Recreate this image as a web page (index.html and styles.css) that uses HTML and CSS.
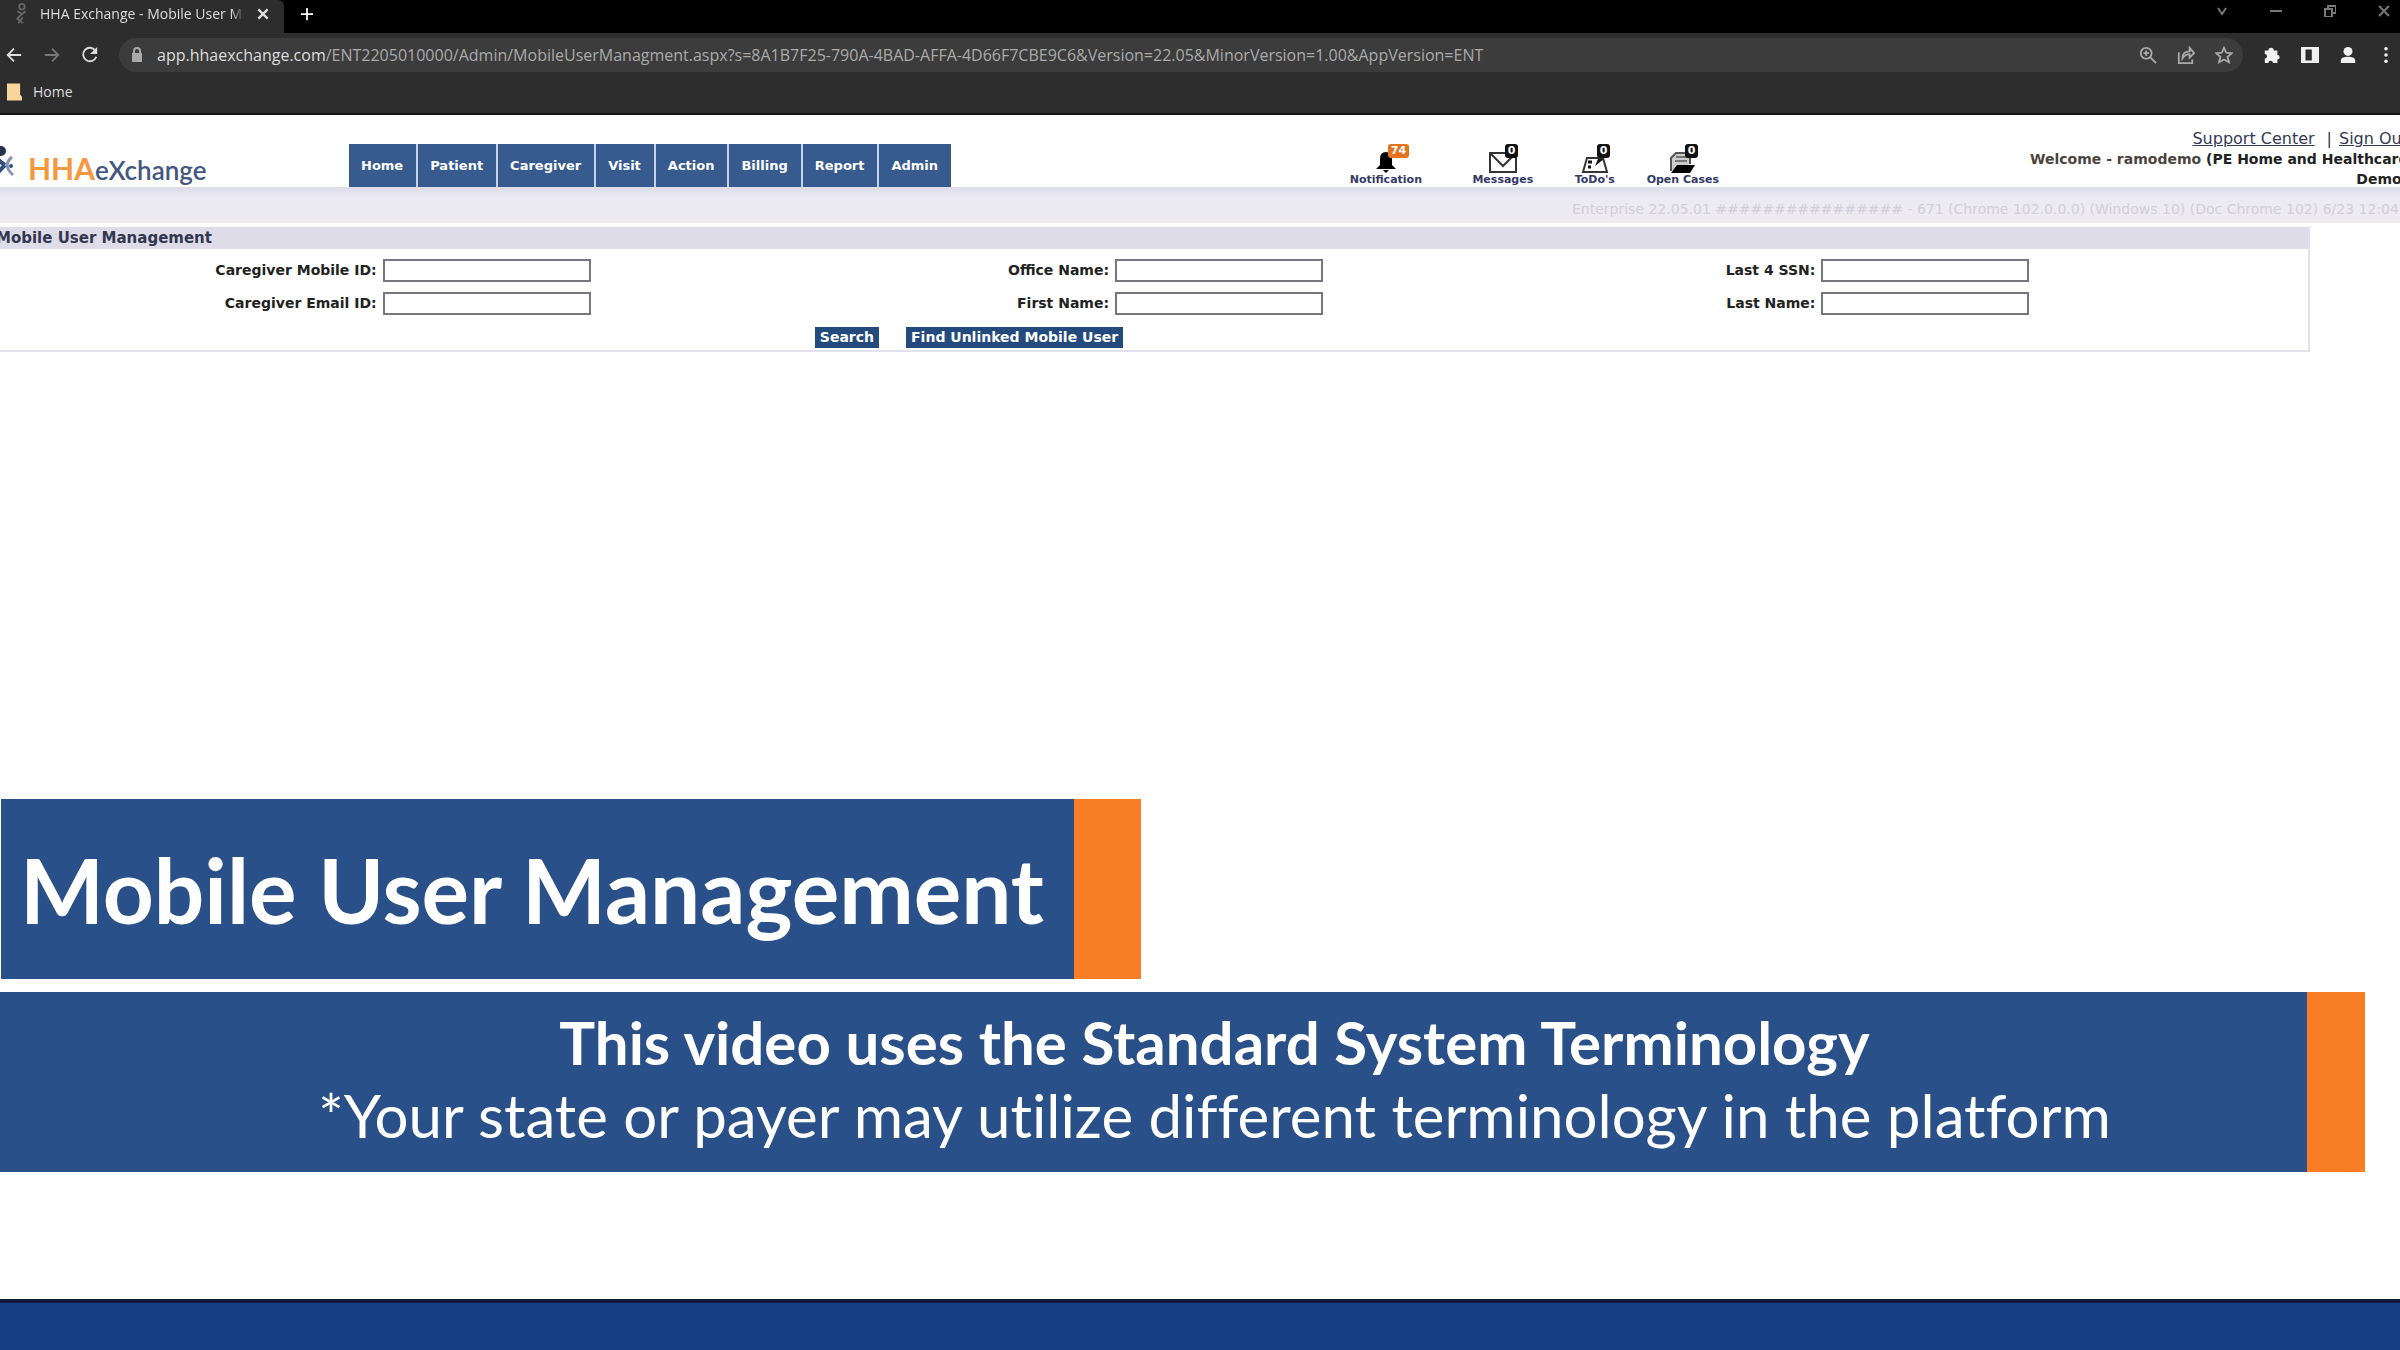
FILE: index.html
```html
<!DOCTYPE html>
<html lang="en">
<head>
    <meta charset="UTF-8">
    <meta name="viewport" content="width=device-width, initial-scale=1.0">
    <title>HHA Exchange - Mobile User Management</title>
    <link rel="stylesheet" href="styles.css">
</head>
<body>
    <!-- Browser chrome -->
    <div class="browser">
        <div class="tab-strip">
            <div class="tab">
                <svg class="favicon" viewBox="0 0 14 24"><circle cx="8" cy="4" r="3"/><path d="M3 9l5 3 4-3M8 12l-5 5 6 5M4 22l5-6"/></svg>
                <span class="tab-title">HHA Exchange - Mobile User Ma</span>
                <button class="tab-close" aria-label="Close tab"><svg viewBox="0 0 12 12"><path d="M2 2l8 8M10 2l-8 8"/></svg></button>
            </div>
            <button class="new-tab" aria-label="New tab"><svg viewBox="0 0 16 16"><path d="M8 1v14M1 8h14"/></svg></button>
            <div class="window-controls">
                <button aria-label="Search tabs"><svg viewBox="0 0 12 12"><path d="M2 3l4 6 4-6"/></svg></button>
                <button aria-label="Minimize"><svg viewBox="0 0 12 12"><path d="M0 6h12"/></svg></button>
                <button aria-label="Restore"><svg viewBox="0 0 12 12"><path d="M1 4h7v8H1zM4 4V1h8v7H8"/></svg></button>
                <button aria-label="Close"><svg viewBox="0 0 12 12"><path d="M1 1l10 10M11 1L1 11"/></svg></button>
            </div>
        </div>

        <div class="toolbar">
            <button aria-label="Back"><svg viewBox="0 0 20 20"><path d="M18 10H3M10 3l-7 7 7 7"/></svg></button>
            <button class="muted" aria-label="Forward"><svg viewBox="0 0 20 20"><path d="M2 10h15M10 3l7 7-7 7"/></svg></button>
            <button aria-label="Reload"><svg viewBox="0 0 20 20"><path d="M16 5a7.500 7.500 0 1 0 1 7"/><path class="fill" d="M18 1v8h-8z"/></svg></button>
            <div class="address">
                <svg class="lock" viewBox="0 0 12 16"><path class="fill" d="M1 6h10v9H1z"/><path d="M3 7V4a3 3 0 0 1 6 0v3"/></svg>
                <span class="url"><b>app.hhaexchange.com</b>/ENT2205010000/Admin/MobileUserManagment.aspx?s=8A1B7F25-790A-4BAD-AFFA-4D66F7CBE9C6&amp;Version=22.05&amp;MinorVersion=1.00&amp;AppVersion=ENT</span>
                <button aria-label="Zoom"><svg viewBox="0 0 20 20"><circle cx="8" cy="8" r="6"/><path d="M12 12l7 7M5 8h6M8 5v6"/></svg></button>
                <button aria-label="Share"><svg viewBox="0 0 20 20"><path d="M2 7v12h15v-4M6 14c0-6 4-8 8-8V2l5 6-5 5V9c-4 0-6 2-8 5z"/></svg></button>
                <button aria-label="Bookmark"><svg viewBox="0 0 20 20"><path d="M10 2l2.500 5.500 6 .5-4.500 4 1.500 6-5.500-3-5.500 3L6 12 1.500 8l6-.5z"/></svg></button>
            </div>
            <button class="bright" aria-label="Extensions"><svg viewBox="0 0 20 20"><path class="fill" d="M2 5h4a3 3 0 1 1 6 0h4v5a2.500 2.500 0 1 1 0 5v4h-5a2.500 2.500 0 1 0-5 0H2v-5a2.500 2.500 0 1 0 0-5z"/></svg></button>
            <button class="bright" aria-label="Side panel"><svg viewBox="0 0 20 20"><path class="fill" fill-rule="evenodd" d="M0 1h20v18H0zM5 4v12h7V4z"/></svg></button>
            <button class="bright" aria-label="Profile"><svg viewBox="0 0 20 20"><circle class="fill" cx="10" cy="6" r="5"/><path class="fill" d="M2 19v-3q0-4 8-4t8 4v3z"/></svg></button>
            <button class="bright" aria-label="Menu"><svg viewBox="0 0 20 20"><circle class="fill" cx="10" cy="3" r="2"/><circle class="fill" cx="10" cy="10" r="2"/><circle class="fill" cx="10" cy="17" r="2"/></svg></button>
        </div>

        <div class="bookmarks">
            <a href="#"><svg viewBox="0 0 16 18"><path d="M0 0h14v12l2 2v4H0z"/></svg>Home</a>
        </div>
    </div>

    <!-- Application header -->
    <header class="app-header">
        <a class="logo" href="#" aria-label="HHAeXchange">
            <svg viewBox="0 0 14 36"><circle cx="1" cy="7" r="5" fill="#26354f"/><path d="M-4 13q4 5 9 8M-4 31q4-5 9-10" fill="none" stroke="#34507f" stroke-width="4"/><path d="M12 13q-10 8 1 18" fill="none" stroke="#8795b3" stroke-width="3"/><circle cx="11" cy="22" r="2" fill="#34507f"/></svg>
            <span class="logo-hha">HHA</span><span class="logo-ex">eXchange</span>
        </a>

        <nav class="main-nav">
            <a href="#">Home</a>
            <a href="#">Patient</a>
            <a href="#">Caregiver</a>
            <a href="#">Visit</a>
            <a href="#">Action</a>
            <a href="#">Billing</a>
            <a href="#">Report</a>
            <a href="#">Admin</a>
        </nav>

        <div class="shortcuts">
            <a href="#">
                <span class="shortcut-icon">
                    <svg viewBox="0 0 28 28"><path d="M14 7q5 0 6 7v6l4 4H4l4-4v-6q0-7 6-7zM11 25h6l-3 3z" fill="#000"/></svg>
                    <span class="badge badge-alert">74</span>
                </span>
                Notification
            </a>
            <a href="#">
                <span class="shortcut-icon">
                    <svg viewBox="0 0 28 28"><path d="M1 8h26v19H1zM1 8l13 13L27 8" fill="#fff" stroke="#333" stroke-width="2"/></svg>
                    <span class="badge">0</span>
                </span>
                Messages
            </a>
            <a href="#">
                <span class="shortcut-icon">
                    <svg viewBox="0 0 28 28"><path d="M6 13h16l4 14H2z" fill="#fff" stroke="#333" stroke-width="2"/><path d="M7 17h4M7 22h3" stroke="#111" stroke-width="3"/><path d="M14 21l3-7h6z" fill="#111"/></svg>
                    <span class="badge">0</span>
                </span>
                ToDo's
            </a>
            <a href="#">
                <span class="shortcut-icon">
                    <svg viewBox="0 0 28 28"><path d="M2 26V13l5-5h14v11" fill="#ccc" stroke="#555" stroke-width="2"/><path d="M7 12h12M6 16h12" stroke="#777" stroke-width="2"/><path d="M8 20h18l-5 8H2z" fill="#000"/></svg>
                    <span class="badge">0</span>
                </span>
                Open Cases
            </a>
        </div>

        <div class="account">
            <div class="account-links"><a href="#">Support Center</a><span>|</span><a href="#">Sign Out</a></div>
            <div><span class="welcome">Welcome - ramodemo</span> (PE Home and Healthcare<br>Demo)</div>
        </div>
    </header>
    <div class="version-bar">Enterprise 22.05.01 ################ - 671 (Chrome 102.0.0.0) (Windows 10) (Doc Chrome 102) 6/23 12:04 PM</div>

    <main>
        <form class="panel">
            <h1>Mobile User Management</h1>
            <div class="fields">
                <label for="mobileId">Caregiver Mobile ID:</label>
                <input type="text" id="mobileId">
                <label for="officeName">Office Name:</label>
                <input type="text" id="officeName">
                <label for="ssn">Last 4 SSN:</label>
                <input type="text" id="ssn">
                <label for="emailId">Caregiver Email ID:</label>
                <input type="text" id="emailId">
                <label for="firstName">First Name:</label>
                <input type="text" id="firstName">
                <label for="lastName">Last Name:</label>
                <input type="text" id="lastName">
            </div>
            <div class="actions">
                <button type="button">Search</button>
                <button type="button">Find Unlinked Mobile User</button>
            </div>
        </form>
    </main>

    <!-- Video captions -->
    <section class="captions">
        <div class="caption caption-title">
            <h2>Mobile User Management</h2>
        </div>
        <div class="caption caption-note">
            <p><strong>This video uses the Standard System Terminology</strong><br>*Your state or payer may utilize different terminology in the platform</p>
        </div>
    </section>

    <footer class="footer-bar"></footer>
</body>
</html>
```
FILE: styles.css
```css
* {
    margin: 0;
    padding: 0;
    box-sizing: border-box;
}

body {
    font-family: "DejaVu Sans", Verdana, sans-serif;
    font-size: 14px;
    color: #222;
    background: #fefefe;
    min-height: 100vh;
    display: flex;
    flex-direction: column;
    overflow: hidden;
}

a {
    color: inherit;
    text-decoration: none;
}

button {
    border: none;
    background: none;
    color: inherit;
    font-family: inherit;
}

/* Browser chrome */
.browser {
    background: #2d2d2d;
    color: #ddd;
    font-family: "Open Sans", "Noto Sans", sans-serif;
    border-bottom: 2px solid #151515;
}

.browser svg {
    display: block;
    fill: none;
    stroke: currentColor;
    stroke-width: 2;
}

.browser .fill {
    fill: currentColor;
    stroke: none;
}

.tab-strip {
    display: flex;
    align-items: center;
    height: 33px;
    background: #000;
}

.tab {
    display: flex;
    align-items: center;
    width: 284px;
    height: 33px;
    padding: 0 14px 6px;
    background: #2d2d2d;
    border-top-right-radius: 6px;
}

.favicon {
    width: 14px;
    height: 22px;
    margin-right: 12px;
    color: #666;
}

.tab-title {
    flex: 1;
    overflow: hidden;
    white-space: nowrap;
    font-size: 14px;
    font-weight: 500;
    line-height: 24px;
    mask-image: linear-gradient(to right, #000 94%, transparent);
}

.tab-close {
    margin-left: 12px;
}

.tab-close svg {
    width: 14px;
    height: 14px;
}

.new-tab {
    margin: 0 0 6px 16px;
    color: #fff;
}

.new-tab svg {
    width: 14px;
    height: 14px;
}

.window-controls {
    display: flex;
    gap: 42px;
    margin: 0 10px 12px auto;
    color: #777;
}

.window-controls svg {
    width: 12px;
    height: 12px;
}

.toolbar {
    display: flex;
    align-items: center;
    gap: 20px;
    height: 43px;
    padding: 0 5px;
}

.toolbar svg {
    width: 18px;
    height: 18px;
}

.toolbar .muted {
    color: #777;
}

.toolbar .bright {
    color: #f0f0f0;
}

.address {
    flex: 1;
    display: flex;
    align-items: center;
    gap: 20px;
    height: 34px;
    padding: 0 10px 0 12px;
    border-radius: 17px;
    background: #3c3c3c;
    color: #aaa;
}

.address .lock {
    width: 12px;
    height: 16px;
}

.url {
    flex: 1;
    margin-left: -6px;
    font-size: 16px;
    white-space: nowrap;
}

.url b {
    color: #ddd;
    font-weight: 500;
}

.bookmarks {
    display: flex;
    align-items: center;
    height: 37px;
    padding: 0 7px 6px;
}

.bookmarks a {
    display: flex;
    align-items: center;
    gap: 11px;
    font-size: 14px;
}

.bookmarks svg {
    width: 15px;
    height: 18px;
    fill: #f7d59c;
    stroke: none;
}

/* Application header */
.app-header {
    display: grid;
    grid-template-columns: 349px 59fr auto 41fr;
    grid-template-rows: 72px;
    background: #fff;
    font-weight: bold;
}

.logo {
    display: flex;
    align-items: baseline;
    padding-top: 29px;
    font-family: Lato, sans-serif;
    line-height: 40px;
}

.logo svg {
    width: 14px;
    height: 36px;
    margin: 0 14px -4px 0;
}

.logo-hha {
    color: #f5983f;
    font-size: 30px;
    font-weight: bold;
}

.logo-ex {
    color: #43577f;
    font-size: 26px;
    font-weight: 600;
}

.main-nav {
    display: flex;
    align-items: flex-end;
}

.main-nav a {
    padding: 0 13px 0 12px;
    border-right: 2px solid #c5d3ea;
    background: #375b8f;
    color: #fff;
    font-size: 13px;
    line-height: 43px;
}

.main-nav a:last-child {
    border-right: none;
}

.shortcuts {
    display: grid;
    grid-template-columns: 134px 100px 84px 92px;
    align-items: end;
    margin-left: 4px;
    font-size: 11px;
    line-height: 14px;
    color: #333a66;
}

.shortcuts a {
    display: flex;
    flex-direction: column;
    align-items: center;
}

.shortcut-icon {
    position: relative;
}

.shortcut-icon svg {
    display: block;
    width: 28px;
    height: 28px;
}

.badge {
    position: absolute;
    top: -1px;
    left: 16px;
    padding: 0 3px;
    border-radius: 3px;
    background: #111;
    color: #fff;
}

.badge-alert {
    background: #e5731d;
}

.account {
    padding-top: 14px;
    margin-right: -8px;
    text-align: right;
    line-height: 20px;
    white-space: nowrap;
}

.account-links {
    color: #333a55;
    font-size: 16px;
    font-weight: normal;
}

.account-links a {
    text-decoration: underline;
}

.account-links span {
    margin: 0 7px 0 12px;
}

.welcome {
    color: #4b433e;
}

.version-bar {
    height: 36px;
    margin-bottom: 4px;
    padding-left: 65.5%;
    overflow: hidden;
    background: linear-gradient(#dcdce8, #ebeaf4 30%, #eeebf0);
    color: #d2cfd8;
    line-height: 44px;
    white-space: nowrap;
}

/* Search panel */
main {
    flex: 1;
}

.panel {
    margin: 0 90px 0 0;
    border: 2px solid #e2e0ea;
    border-width: 0 2px 2px 0;
    background: #fff;
}

.panel h1 {
    margin-left: -4px;
    background: #dddce8;
    color: #33374f;
    font-size: 15px;
    line-height: 22px;
}

.fields {
    display: grid;
    grid-template-columns: 377fr 363fr 370fr 353fr 354fr 493fr;
    row-gap: 10px;
    padding-top: 10px;
    font-weight: bold;
}

.fields label {
    text-align: right;
    line-height: 23px;
}

.fields input {
    width: 208px;
    height: 23px;
    margin-left: 6px;
    border: 2px solid #77757d;
    background: #fff;
}

.actions {
    display: flex;
    justify-content: center;
    gap: 27px;
    padding: 12px 370px 2px 0;
}

.actions button {
    padding: 0 5px;
    background: #234a7d;
    color: #fff;
    font-size: 14px;
    font-weight: bold;
    line-height: 21px;
}

/* Video captions */
.captions {
    display: flex;
    flex-direction: column;
    align-items: flex-start;
    gap: 13px;
    margin-bottom: 127px;
    font-family: Lato, sans-serif;
    font-variant-ligatures: none;
    color: #fff;
}

.caption {
    display: flex;
    align-items: center;
    height: 180px;
    background: #295088;
}

.caption-title {
    margin-left: 1px;
    padding: 0 30px 0 19px;
    border-right: 67px solid #f97d25;
}

.caption-title h2 {
    font-size: 89px;
    font-weight: bold;
}

.caption-note {
    align-self: stretch;
    justify-content: center;
    margin-right: 35px;
    padding: 0 0 6px 122px;
    border-right: 58px solid #f97d25;
    text-align: center;
}

.caption-note p {
    font-size: 60px;
    line-height: 73px;
}

.footer-bar {
    height: 51px;
    border-top: 4px solid #14183a;
    background: #153f85;
}
```
